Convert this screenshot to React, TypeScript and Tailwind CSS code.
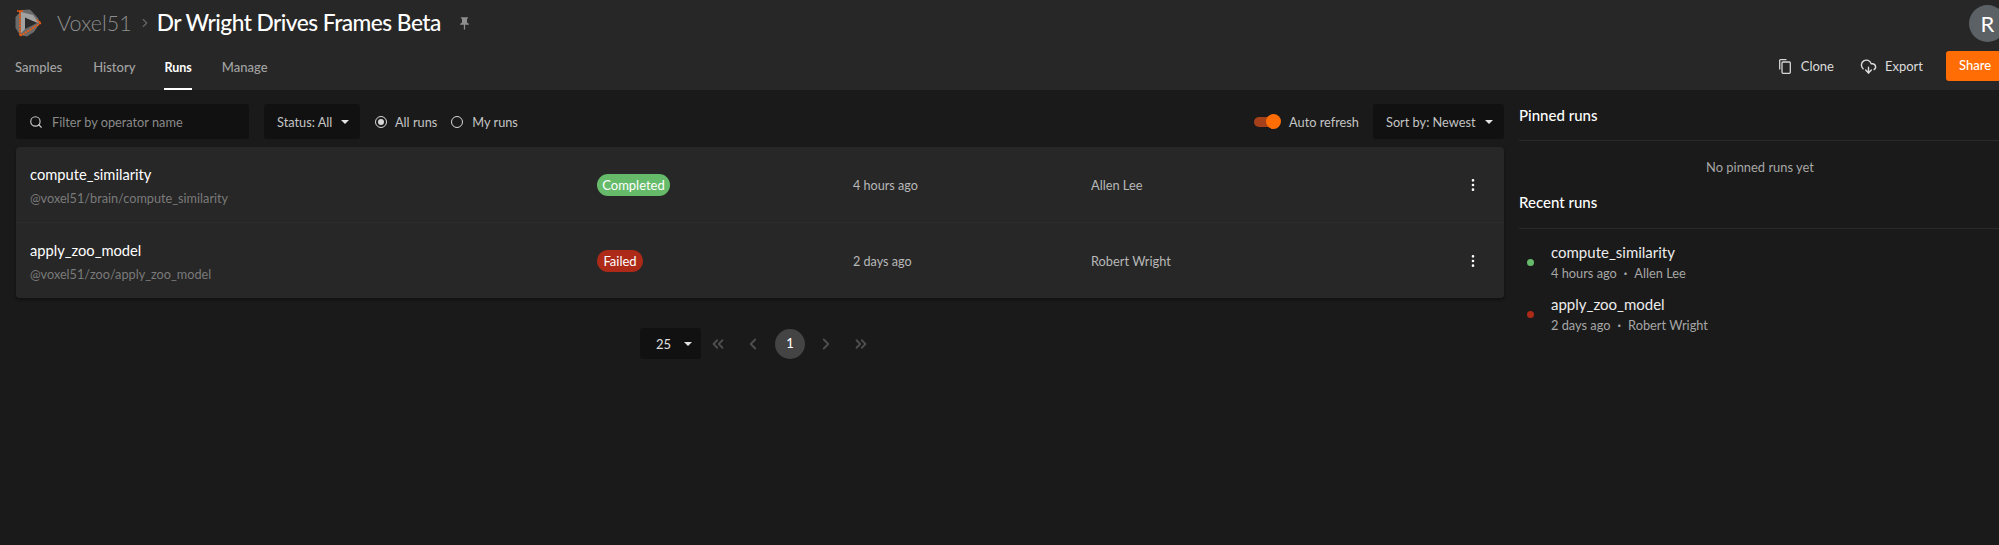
import { CloudDownload, Search, ChevronRight, ChevronLeft, ChevronsLeft, ChevronsRight, EllipsisVertical } from "lucide-react";

const Caret = () => <span className="ml-auto h-0 w-0 border-x-[4px] border-t-[4px] border-x-transparent border-t-[#e4e4e4]" />;

const Logo = () => (
  <svg width="30" height="30" viewBox="0 0 30 30" className="shrink-0">
    <path d="M8 2 L16 1.5 L24 10 L26 15 L20 24 L13 28.5 L6 27 L1.5 20 L1.5 9 Z" fill="#6a6a6a" />
    <path d="M7 4 L19 7 L25 15 L12 11 L12 20 L7 25 Z" fill="#a2a2a2" />
    <path d="M11 9.5 L23 15 L11 21 Z" fill="#2a2a2a" />
    <path d="M6 3 L6 28 L27 15 L22 11.5" fill="none" stroke="#f2590d" strokeWidth="1.7" strokeDasharray="2 0.8" />
    <path d="M3 3 L9 3" fill="none" stroke="#f2590d" strokeWidth="1.4" />
  </svg>
);

const PinIcon = () => (
  <svg width="15" height="15" viewBox="0 0 24 24" fill="#8e8e8e" className="ml-[16px]">
    <path d="M16 9V4h1c.55 0 1-.45 1-1s-.45-1-1-1H7c-.55 0-1 .45-1 1s.45 1 1 1h1v5c0 1.66-1.34 3-3 3v2h5.97v7l1 1 1-1v-7H19v-2c-1.66 0-3-1.34-3-3z" />
  </svg>
);

const CloneIcon = () => (
  <svg width="12" height="15" viewBox="0 0 12 15" fill="none" stroke="#d8d8d8" strokeWidth="1.3">
    <path d="M0.7 10.5 V1.5 Q0.7 0.7 1.5 0.7 H7.5" />
    <rect x="3" y="3" width="8.3" height="11.3" rx="1" />
  </svg>
);

const runs = [
  { name: "compute_similarity", uri: "@voxel51/brain/compute_similarity", status: "Completed", badge: "bg-[#66bb6a] w-[73px]", time: "4 hours ago", user: "Allen Lee", dot: "bg-[#66bb6a]" },
  { name: "apply_zoo_model", uri: "@voxel51/zoo/apply_zoo_model", status: "Failed", badge: "bg-[#ad2a18] w-[46px]", time: "2 days ago", user: "Robert Wright", dot: "bg-[#ad2a18]" },
];

export default function App() {
  return (
    <div className="h-[545px] w-[1999px] overflow-hidden bg-[#1a1a1a] font-['Lato',sans-serif] text-[13px] text-[#c4c4c4]">
      <header className="h-[90px] bg-[#272727]">
        <div className="flex h-[46px] items-center pl-[14px]">
          <Logo />
          <span className="ml-[13px] pt-[1px] text-[21.5px] font-light text-[#8e8e8e]">Voxel51</span>
          <ChevronRight size={14} className="ml-[6px] text-[#666]" />
          <span className="ml-[5px] pt-[1px] text-[22.7px] font-medium tracking-[-0.52px] text-white">Dr Wright Drives Frames Beta</span>
          <PinIcon />
          <div className="ml-auto mr-[-7px] flex h-[37px] w-[37px] shrink-0 items-center justify-center rounded-full bg-[#5b6165] text-[22px] text-white">R</div>
        </div>
        <div className="flex h-[44px] items-stretch pl-[15px]">
          <span className="flex items-center font-medium text-[#a3a3a3]">Samples</span>
          <span className="ml-[31px] flex items-center font-medium text-[#a3a3a3]">History</span>
          <span className="ml-[29px] flex items-center border-b-2 border-white pt-[2px] text-[12.5px] font-bold text-white">Runs</span>
          <span className="ml-[30px] flex items-center font-medium text-[#a3a3a3]">Manage</span>
          <div className="ml-auto flex items-center pb-[4px] text-[#dcdcdc]">
            <CloneIcon />
            <span className="ml-[10px] pt-[2px]">Clone</span>
            <CloudDownload size={17} className="ml-[26px]" />
            <span className="ml-[8px] pt-[2px]">Export</span>
            <span className="ml-[23px] flex h-[30px] w-[53px] items-center rounded-l-[3px] bg-[#ff6d04] pl-[13px] font-medium text-white">Share</span>
          </div>
        </div>
      </header>

      <main className="flex">
        <section className="ml-[16px] w-[1488px] shrink-0">
          <div className="mt-[14px] flex h-[35px] items-center text-[12.75px]">
            <div className="flex h-full w-[233px] items-center rounded-[3px] bg-[#111111] pl-[13px] text-[#8a8a8a]">
              <Search size={14} className="text-[#c8c8c8]" />
              <span className="ml-[9px] pt-[2px]">Filter by operator name</span>
            </div>
            <div className="ml-[15px] flex h-full w-[96px] items-center rounded-[3px] bg-[#111111] pl-[13px] pr-[11px]">
              <span className="pt-[2px]">Status: All</span>
              <Caret />
            </div>
            <span className="ml-[15px] flex h-[12px] w-[12px] items-center justify-center rounded-full border border-[#d8d8d8]">
              <span className="h-[6px] w-[6px] rounded-full bg-[#d8d8d8]" />
            </span>
            <span className="ml-[8px] pt-[2px]">All runs</span>
            <span className="ml-[14px] h-[12px] w-[12px] rounded-full border border-[#d8d8d8]" />
            <span className="ml-[9px] pt-[2px]">My runs</span>
            <div className="relative ml-auto h-[10px] w-[24px] rounded-full bg-[#a5401a]">
              <span className="absolute right-[-3px] top-[-3px] h-[15px] w-[15px] rounded-full bg-[#ff6d04]" />
            </div>
            <span className="ml-[11px] pt-[2px]">Auto refresh</span>
            <div className="ml-[14px] flex h-full w-[131px] items-center rounded-[3px] bg-[#111111] pl-[13px] pr-[11px]">
              <span className="pt-[2px]">Sort by: Newest</span>
              <Caret />
            </div>
          </div>

          <div className="mt-[8px] rounded-[4px] bg-[#272727] shadow-[0_2px_3px_rgba(0,0,0,0.35)]">
            {runs.map((r, i) => (
              <div key={r.name} className={`flex h-[75.5px] items-center pt-[2px] ${i === 0 ? "border-b border-[#2c2c2c]" : ""}`}>
                <div className="w-[581px] pl-[14px]">
                  <div className="text-[14.7px] leading-[22px] text-white">{r.name}</div>
                  <div className="mt-[3px] text-[12.7px] leading-[20px] text-[#7a7a7a]">{r.uri}</div>
                </div>
                <div className="w-[256px]">
                  <span className={`flex h-[22px] items-center justify-center rounded-full text-[13px] text-white ${r.badge}`}>{r.status}</span>
                </div>
                <span className="w-[238px] pt-[2px] text-[12.6px] text-[#b8b8b8]">{r.time}</span>
                <span className="w-[374px] text-[12.8px] text-[#b8b8b8]">{r.user}</span>
                <EllipsisVertical size={16} className="text-white" />
              </div>
            ))}
          </div>

          <div className="mt-[30px] flex h-[31px] items-center pl-[624px]">
            <div className="flex h-full w-[61px] items-center rounded-[3px] bg-[#111111] pl-[16px] pr-[9px] text-[13px] text-[#e0e0e0]">
              <span className="pt-[2px]">25</span>
              <Caret />
            </div>
            <ChevronsLeft size={18} strokeWidth={2.4} className="ml-[8px] text-[#4e4e4e]" />
            <ChevronLeft size={18} strokeWidth={2.4} className="ml-[17px] text-[#4e4e4e]" />
            <span className="ml-[13px] flex h-[30px] w-[30px] items-center justify-center rounded-full bg-[#444444] text-[13px] font-medium text-white">1</span>
            <ChevronRight size={18} strokeWidth={2.4} className="ml-[12px] text-[#4e4e4e]" />
            <ChevronsRight size={18} strokeWidth={2.4} className="ml-[17px] text-[#4e4e4e]" />
          </div>
        </section>

        <aside className="ml-[15px] flex-1">
          <div className="flex h-[51px] items-center border-b border-[#2a2a2a] text-[15px] font-medium text-white">Pinned runs</div>
          <div className="flex h-[52px] items-center justify-center pl-[2px] pt-[2px] text-[12.9px] text-[#a6a6a6]">No pinned runs yet</div>
          <div className="flex h-[36px] items-start border-b border-[#2a2a2a] text-[15px] font-medium leading-[18px] text-white">Recent runs</div>
          <div className="mt-[7px] flex flex-col">
            {runs.map((r) => (
              <div key={r.name} className="flex h-[52px] items-center">
                <span className={`ml-[8px] h-[7px] w-[7px] rounded-full ${r.dot}`} />
                <div className="ml-[17px]">
                  <div className="text-[15px] leading-[20px] text-[#ececec]">{r.name}</div>
                  <div className="mt-[1px] flex text-[12.8px] leading-[20px] text-[#a6a6a6]">
                    <span>{r.time}</span>
                    <span className="mx-[7px] font-bold">·</span>
                    <span>{r.user}</span>
                  </div>
                </div>
              </div>
            ))}
          </div>
        </aside>
      </main>
    </div>
  );
}
